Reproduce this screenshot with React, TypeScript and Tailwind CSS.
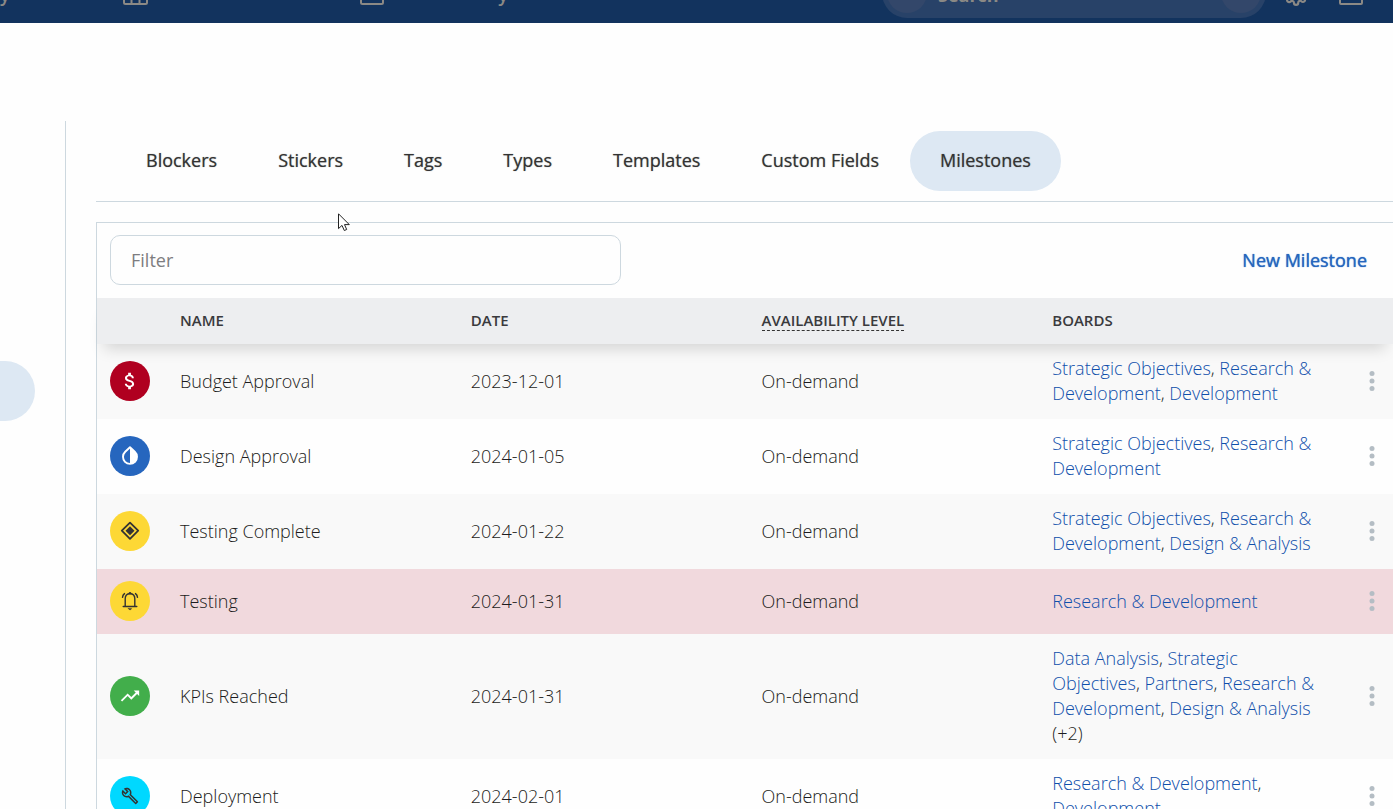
import type { ReactNode } from "react";
import { FiSettings } from "react-icons/fi";
import { MdAttachMoney, MdOutlineBuild, MdSearch, MdTrendingUp } from "react-icons/md";

type Milestone = {
  name: string;
  date: string;
  boards: string[];
  more?: string;
  circle: string;
  row: string;
  icon: ReactNode;
};

const DropIcon = () => (
  <svg width="24" height="24" viewBox="0 0 24 24" aria-hidden="true">
    <path d="M12 3.2 L7.2 7.8 A7 7 0 1 0 16.8 7.8 Z" fill="none" stroke="currentColor" strokeWidth="1.9" strokeLinejoin="round" />
    <path d="M12 3.2 L16.8 7.8 A7 7 0 0 1 12 19.8 Z" fill="currentColor" />
  </svg>
);

const DiamondIcon = () => (
  <svg width="24" height="24" viewBox="0 0 24 24" aria-hidden="true">
    <path d="M12 3.6 L20.2 11.7 L12 19.8 L3.8 11.7 Z" fill="none" stroke="currentColor" strokeWidth="1.8" strokeLinejoin="round" />
    <path d="M12 7.2 L16.5 11.7 L12 16.2 L7.5 11.7 Z" fill="currentColor" />
  </svg>
);

const BellIcon = () => (
  <svg width="24" height="24" viewBox="0 0 24 24" fill="none" stroke="currentColor" strokeWidth="1.4" strokeLinecap="round" aria-hidden="true">
    <path d="M7.2 17.3 V9.8 C7.2 6.8 9.2 4.8 12 4.8 C14.8 4.8 16.8 6.8 16.8 9.8 V17.3" />
    <path d="M5.2 17.5 H18.8" />
    <path d="M10.6 4.4 C11 2.8 13 2.8 13.4 4.4 Z" fill="currentColor" strokeWidth="0.6" />
    <path d="M10.4 19.4 H13.6 C13.2 21.2 10.8 21.2 10.4 19.4 Z" fill="currentColor" strokeWidth="0.4" />
    <path d="M4.5 8.4 C4.6 6.8 5.3 5.5 6.5 4.6 M19.5 8.4 C19.4 6.8 18.7 5.5 17.5 4.6" />
  </svg>
);

const milestones: Milestone[] = [
  {
    name: "Budget Approval",
    date: "2023-12-01",
    boards: ["Strategic Objectives", "Research & Development", "Development"],
    circle: "bg-[#b00020] text-white",
    row: "bg-[#f9f9f9]",
    icon: <MdAttachMoney size={22} />,
  },
  {
    name: "Design Approval",
    date: "2024-01-05",
    boards: ["Strategic Objectives", "Research & Development"],
    circle: "bg-[#2666be] text-white",
    row: "bg-[#fefefe]",
    icon: <DropIcon />,
  },
  {
    name: "Testing Complete",
    date: "2024-01-22",
    boards: ["Strategic Objectives", "Research & Development", "Design & Analysis"],
    circle: "bg-[#fdd835] text-[#333333]",
    row: "bg-[#f9f9f9]",
    icon: <DiamondIcon />,
  },
  {
    name: "Testing",
    date: "2024-01-31",
    boards: ["Research & Development"],
    circle: "bg-[#fdd835] text-[#333333]",
    row: "bg-[#f1d9dd]",
    icon: <BellIcon />,
  },
  {
    name: "KPIs Reached",
    date: "2024-01-31",
    boards: ["Data Analysis", "Strategic Objectives", "Partners", "Research & Development", "Design & Analysis"],
    more: "(+2)",
    circle: "bg-[#42ae4b] text-white",
    row: "bg-[#f9f9f9]",
    icon: <MdTrendingUp size={22} />,
  },
  {
    name: "Deployment",
    date: "2024-02-01",
    boards: ["Research & Development", "Development"],
    circle: "bg-[#00d8ff] text-[#333333]",
    row: "bg-[#fefefe]",
    icon: <MdOutlineBuild size={18} />,
  },
];

const tabs = ["Blockers", "Stickers", "Tags", "Types", "Templates", "Custom Fields", "Milestones"];

function TopBar() {
  return (
    <header className="flex h-[23px] items-end overflow-hidden bg-[#12335e] text-[#8b8985]">
      <div className="flex h-[60px] w-full shrink-0 items-center pr-[30px]">
        <a href="#activity" className="w-[123px] shrink-0 pt-1 font-semibold">y</a>
        <a href="#boards" aria-label="Boards" className="mr-[212px] shrink-0">
          <svg width="25" height="24" viewBox="0 0 25 24" fill="none" stroke="currentColor" strokeWidth="2" aria-hidden="true">
            <rect x="1" y="1" width="23" height="22" rx="1.5" />
            <path d="M8.5 1 V23 M16.5 1 V23" />
          </svg>
        </a>
        <a href="#library" className="flex shrink-0 items-center">
          <svg width="24" height="24" viewBox="0 0 24 24" fill="none" stroke="currentColor" strokeWidth="2" aria-hidden="true">
            <rect x="1" y="1" width="22" height="22" rx="1.5" />
          </svg>
          <span className="w-[124px] pt-1 text-right font-semibold">y</span>
        </a>
        <label className="ml-auto flex h-[50px] w-[384px] shrink-0 items-center rounded-full bg-[#284268] p-[5px]">
          <span className="flex size-10 shrink-0 items-center justify-center rounded-full bg-[#33476a]">
            <MdSearch size={20} />
          </span>
          <input
            aria-label="Search"
            placeholder="Search"
            className="w-full min-w-0 bg-transparent pt-1 pl-[11px] font-bold placeholder:text-[#8b8985] focus:outline-none"
          />
          <span className="size-10 shrink-0 rounded-full bg-[#33476a]" />
        </label>
        <button type="button" aria-label="Settings" className="ml-[17px] shrink-0">
          <FiSettings size={26} />
        </button>
        <button type="button" aria-label="Inbox" className="ml-[30px] shrink-0">
          <svg width="24" height="24" viewBox="0 0 24 24" fill="none" stroke="currentColor" strokeWidth="2" aria-hidden="true">
            <rect x="1" y="1" width="22" height="22" rx="1" />
          </svg>
        </button>
      </div>
    </header>
  );
}

function MilestoneRow({ item }: { item: Milestone }) {
  return (
    <tr className={item.row}>
      <td className="pt-3 pb-[13px] pl-[13px]">
        <span className={`flex size-10 items-center justify-center rounded-full ${item.circle}`}>{item.icon}</span>
      </td>
      <td>{item.name}</td>
      <td>{item.date}</td>
      <td>On-demand</td>
      <td className="pt-3 pr-5 pb-[13px]">
        {item.boards.map((board, i) => (
          <span key={board}>
            <a href="#board" className="text-[#0f4fab]">{board}</a>
            {i < item.boards.length - 1 ? ", " : ""}
          </span>
        ))}
        {item.more ? ` ${item.more}` : ""}
      </td>
      <td className="pb-[2px]">
        <button type="button" aria-label={`Options for ${item.name}`} className="flex w-[58px] justify-center">
          <svg width="6" height="20" viewBox="0 0 6 20" fill="#b4bdc4" aria-hidden="true">
            <circle cx="3" cy="2.5" r="2.5" />
            <circle cx="3" cy="10" r="2.5" />
            <circle cx="3" cy="17.5" r="2.5" />
          </svg>
        </button>
      </td>
    </tr>
  );
}

export default function App() {
  return (
    <div className="relative flex h-screen flex-col overflow-hidden bg-[#fefefe] font-['Open_Sans',sans-serif] text-[18px] leading-[25px] text-[#333333]">
      <TopBar />
      <div className="flex min-h-0 flex-1 pt-[98px]">
        <aside className="w-[65px] shrink-0 pt-60">
          <button type="button" aria-label="Card settings" className="block h-[60px] w-[35px] rounded-r-full bg-[#dde8f3]" />
        </aside>
        <main className="min-w-0 flex-1 border-l border-[#cdd8df] pl-[30px]">
          <nav className="flex gap-px border-b border-[#cdd8df] py-[10px] pl-5">
            {tabs.map((tab) => (
              <button
                key={tab}
                type="button"
                className={`h-[60px] shrink-0 rounded-full px-[30px] pb-[2px] font-medium [text-shadow:0_0_1px_#33333399] ${tab === "Milestones" ? "bg-[#dde8f3]" : ""}`}
              >
                {tab}
              </button>
            ))}
          </nav>
          <section className="mt-5 border-t border-l border-[#cdd8df]">
            <div className="flex items-center justify-between pt-3 pr-[26px] pb-[13px] pl-[13px]">
              <input
                aria-label="Filter"
                placeholder="Filter"
                className="h-[50px] w-full max-w-[511px] rounded-[10px] border border-[#cdd8df] px-5 placeholder:text-[#7d7d80] focus:outline-none"
              />
              <button type="button" className="font-medium whitespace-nowrap text-[#2666be] [text-shadow:0_0_1px_#2666be]">New Milestone</button>
            </div>
            <table className="w-full table-fixed border-collapse text-left font-light text-[#1c1c20]">
              <colgroup>
                <col className="w-[83px]" />
                <col />
                <col />
                <col />
                <col />
                <col className="w-[50px]" />
              </colgroup>
              <thead className="relative z-10 bg-[#edeef0] text-[15px] leading-5 text-[#3a3a3d] shadow-[0_12px_15px_-7px_rgba(0,0,0,0.15)]">
                <tr className="h-[46px]">
                  <td />
                  <th scope="col" className="pb-[2px] font-semibold">NAME</th>
                  <th scope="col" className="pb-[2px] font-semibold">DATE</th>
                  <th scope="col" className="pb-[2px] font-semibold">
                    <span className="border-b border-dashed border-[#333333]">AVAILABILITY LEVEL</span>
                  </th>
                  <th scope="col" className="pb-[2px] font-semibold">BOARDS</th>
                  <td />
                </tr>
              </thead>
              <tbody>
                {milestones.map((item) => (
                  <MilestoneRow key={item.name} item={item} />
                ))}
              </tbody>
            </table>
          </section>
        </main>
      </div>
      <svg className="absolute top-[213px] left-[338px]" width="13" height="19" viewBox="0 0 13 19" aria-hidden="true">
        <path d="M0.5 0.8 V15.6 L4 12.4 L6.3 17.5 L8.7 16.5 L6.5 11.6 H11.3 Z" fill="#ffffff" stroke="#222222" strokeWidth="1" />
      </svg>
    </div>
  );
}
